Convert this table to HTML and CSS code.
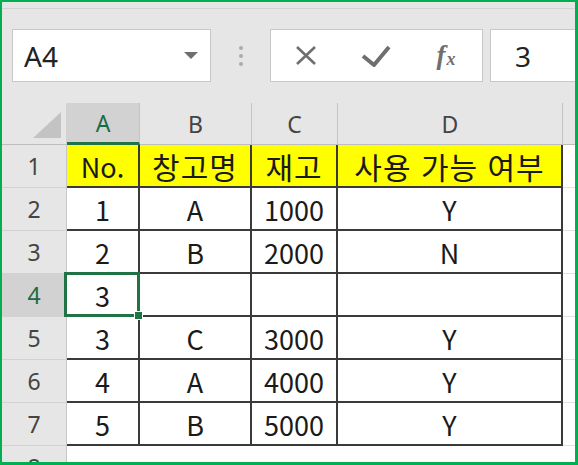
FILE: index.html
```html
<!DOCTYPE html>
<html lang="ko">
<head>
<meta charset="utf-8">
<link rel="stylesheet" href="styles.css">
</head>
<body>
<div class="frame">
  <div class="topline"></div>
  <div class="fbar">
    <div class="namebox">
      <span class="ref">A4</span>
      <svg class="caret" width="14" height="8" viewBox="0 0 14 8"><polygon points="0,0 14,0 7,7" fill="#6f6f6f"/></svg>
    </div>
    <div class="grip"><i></i><i></i><i></i></div>
    <div class="btns">
      <div class="btn"><svg width="22" height="21" viewBox="0 0 22 21"><path d="M2 2 L20 19 M20 2 L2 19" stroke="#6f6f6f" stroke-width="2.6" fill="none"/></svg></div>
      <div class="btn"><svg width="30" height="22" viewBox="0 0 30 22"><path d="M2 11 L13 20 L28 2" stroke="#6f6f6f" stroke-width="4" fill="none" stroke-linejoin="round"/></svg></div>
      <div class="btn fx"><span class="f">f</span><span class="x">x</span></div>
    </div>
    <div class="input">3</div>
  </div>
  <div class="sheet">
    <div class="corner"><svg width="28" height="26" viewBox="0 0 28 26"><polygon points="0,26 28,26 28,0" fill="#c3c3c3"/></svg></div>
    <div class="ch sel">A</div>
    <div class="ch">B</div>
    <div class="ch">C</div>
    <div class="ch">D</div>
    <div class="ch rest"></div>

    <div class="rh">1</div>
    <div class="c y">No.</div>
    <div class="c y ko">창고명</div>
    <div class="c y ko">재고</div>
    <div class="c y ko">사용 가능 여부</div>
    <div class="c blank"></div>

    <div class="rh">2</div>
    <div class="c">1</div>
    <div class="c">A</div>
    <div class="c">1000</div>
    <div class="c">Y</div>
    <div class="c blank"></div>

    <div class="rh">3</div>
    <div class="c">2</div>
    <div class="c">B</div>
    <div class="c">2000</div>
    <div class="c">N</div>
    <div class="c blank"></div>

    <div class="rh sel">4</div>
    <div class="c active">3</div>
    <div class="c"></div>
    <div class="c"></div>
    <div class="c"></div>
    <div class="c blank"></div>

    <div class="rh">5</div>
    <div class="c">3</div>
    <div class="c">C</div>
    <div class="c">3000</div>
    <div class="c">Y</div>
    <div class="c blank"></div>

    <div class="rh">6</div>
    <div class="c">4</div>
    <div class="c">A</div>
    <div class="c">4000</div>
    <div class="c">Y</div>
    <div class="c blank"></div>

    <div class="rh">7</div>
    <div class="c">5</div>
    <div class="c">B</div>
    <div class="c">5000</div>
    <div class="c">Y</div>
    <div class="c blank"></div>

    <div class="rh last">8</div>
    <div class="empty"></div>
  </div>
</div>
</body>
</html>
```
FILE: styles.css
```css
* { box-sizing: border-box; }
html, body { margin: 0; padding: 0; background: #fff; }
.frame {
  width: 578px;
  height: 465px;
  border: 2px solid #00b050;
  border-right-width: 3px;
  border-bottom-width: 3px;
  background: #e6e6e6;
  overflow: hidden;
  display: flex;
  flex-direction: column;
  font-family: "Noto Sans", "Noto Sans CJK KR", sans-serif;
}
.topline {
  flex: 0 0 7px;
  border-bottom: 1px solid #d3d3d3;
}
.fbar {
  flex: 0 0 94px;
  display: flex;
  align-items: stretch;
  padding: 20px 0 21px 10px;
}
.namebox {
  width: 199px;
  background: #fff;
  border: 1px solid #c8c8c8;
  display: flex;
  align-items: center;
  justify-content: space-between;
  padding: 0 12px 0 11px;
}
.ref, .input {
  font-size: 28px;
  color: #222;
  line-height: 1;
}
.caret { margin-top: 1px; }
.grip {
  width: 59px;
  display: flex;
  flex-direction: column;
  align-items: center;
  justify-content: center;
  gap: 4px;
}
.grip i {
  display: block;
  width: 4px;
  height: 4px;
  border-radius: 50%;
  background: #ababab;
}
.btns {
  width: 213px;
  background: #fff;
  border: 1px solid #c8c8c8;
  display: grid;
  grid-template-columns: repeat(3, 70px);
  align-items: center;
}
.btn {
  display: flex;
  justify-content: center;
  align-items: center;
}
.fx {
  font-family: "Liberation Serif", serif;
  font-style: italic;
  font-weight: bold;
  color: #6f6f6f;
  line-height: 1;
}
.fx .f { font-size: 27px; }
.fx .x { font-size: 18px; margin-top: 6px; margin-left: 1px; }
.input {
  flex: 1;
  margin-left: 7px;
  margin-right: -4px;
  background: #fff;
  border: 1px solid #c8c8c8;
  border-right: none;
  display: flex;
  align-items: center;
  padding-left: 24px;
}
.sheet {
  flex: 1 1 auto;
  min-height: 0;
  display: grid;
  grid-template-columns: 65px 73px 112px 86px 225px 1fr;
  grid-template-rows: 42px repeat(7, 43px) 40px;
  background: #fff;
}
.corner {
  background: #e6e6e6;
  border-bottom: 1px solid #bdbdbd;
  border-right: 1px solid #d0d0d0;
  display: flex;
  align-items: flex-end;
  justify-content: flex-end;
  padding: 0 5px 6px 0;
}
.ch {
  background: #e6e6e6;
  border-right: 1px solid #c4c4c4;
  border-bottom: 1px solid #bdbdbd;
  display: flex;
  align-items: center;
  justify-content: center;
  font-size: 23px;
  color: #444;
}
.ch.sel {
  background: #d2d2d2;
  color: #1d6b45;
  border-bottom: 3px solid #217346;
}
.ch.rest { border-right: none; }
.rh {
  background: #e6e6e6;
  border-right: 1px solid #c6c6c6;
  border-bottom: 1px solid #d2d2d2;
  display: flex;
  align-items: center;
  justify-content: center;
  font-size: 23px;
  color: #444;
}
.rh.sel {
  background: #d2d2d2;
  color: #1d6b45;
}
.rh.last {
  align-items: flex-start;
  padding-top: 10px;
  line-height: 1;
  border-bottom: none;
}
.c {
  background: #fff;
  border-right: 2px solid #3a3a3a;
  border-bottom: 2px solid #3a3a3a;
  display: flex;
  align-items: center;
  justify-content: center;
  font-family: "Noto Sans CJK KR", sans-serif;
  font-size: 27px;
  color: #1a1a1a;
  line-height: 1;
  padding-top: 1px;
}
.c.y { background: #ffff00; }
.c.ko { font-size: 30px; letter-spacing: 1px; }
.c.blank {
  border: none;
  border-bottom: 1px solid #e2e2e2;
}
.c.active { position: relative; }
.c.active::after {
  content: "";
  position: absolute;
  left: -3px;
  top: -2px;
  right: -2px;
  bottom: -2px;
  border: 3px solid #217346;
}
.c.active::before {
  content: "";
  position: absolute;
  right: -5px;
  bottom: -5px;
  width: 7px;
  height: 7px;
  background: #217346;
  border: 1px solid #fff;
  z-index: 2;
}
.empty {
  grid-column: 2 / 7;
  background: #fff;
}
```
